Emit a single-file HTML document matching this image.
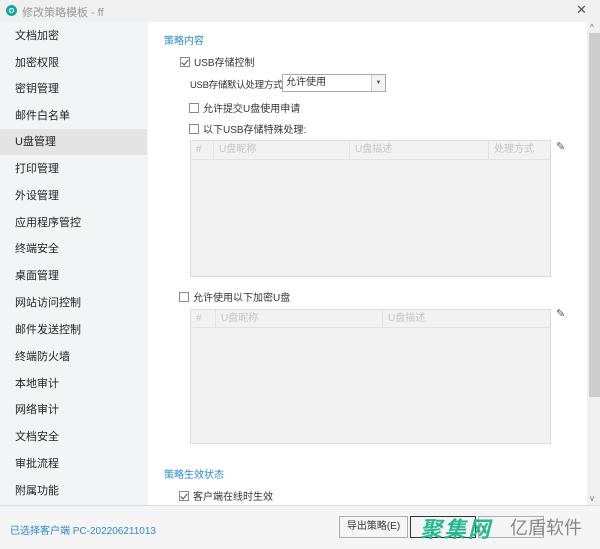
<!DOCTYPE html>
<html><head><meta charset="utf-8"><style>
*{margin:0;padding:0;box-sizing:border-box}
body{width:600px;height:549px;overflow:hidden;background:#f3f4f6;font-family:"Liberation Sans","Noto Sans CJK SC",sans-serif;font-size:11px;color:#333;position:relative}
.abs{position:absolute}
.title{left:0;top:0;width:600px;height:22px;background:#f0f0f0}
.side div{position:absolute;left:0;width:147px;height:26px;line-height:26px;padding-left:15px;font-size:11px;color:#222}
.content{left:148px;top:22px;width:439px;height:483px;background:#fff}
.scroll{left:587px;top:22px;width:13px;height:483px;background:#f0f0f0}
.thumb{left:589px;top:33px;width:11px;height:364px;background:#cdcdcd}
.blue{color:#2a8bd0;font-size:10px}
.cb{display:inline-block;width:10px;height:10px;border:1px solid #888;background:#fff;vertical-align:-1px;margin-right:4px;position:relative}
.cb.on::after{content:"";position:absolute;left:2px;top:0px;width:3px;height:6px;border:solid #444;border-width:0 1px 1px 0;transform:rotate(40deg)}
.t{font-size:10px;color:#333}
.table{background:#f2f2f2;border:1px solid #ddd}
.th{position:absolute;top:0;height:18px;line-height:18px;color:#c4c4c4;font-size:10px;border-right:1px solid #e2e2e2;padding-left:5px}
.footer{left:0;top:505px;width:600px;height:44px;background:#f5f5f5;border-top:1px solid #ddd}
.btn{height:22px;border:1px solid #adadad;background:#f5f5f5;line-height:20px;text-align:center;font-size:10px}
</style></head><body>
<div class="abs title"></div>
<div class="abs" style="left:6px;top:5px;width:11px;height:11px;border-radius:50%;background:#1aa79a"></div>
<div class="abs" style="left:9px;top:8px;width:5px;height:5px;border-radius:50%;border:1.5px solid #fff"></div>
<div class="abs" style="left:22px;top:4px;font-size:11px;color:#999">修改策略模板 - ff</div>
<div class="abs" style="left:576px;top:2px;font-size:13px;color:#555">✕</div>
<div class="side">
<div style="top:23px">文档加密</div><div style="top:50px">加密权限</div><div style="top:76px">密钥管理</div><div style="top:103px">邮件白名单</div>
<div style="top:129px;background:#e4e4e4">U盘管理</div><div style="top:156px">打印管理</div><div style="top:183px">外设管理</div><div style="top:210px">应用程序管控</div>
<div style="top:236px">终端安全</div><div style="top:263px">桌面管理</div><div style="top:290px">网站访问控制</div><div style="top:317px">邮件发送控制</div>
<div style="top:344px">终端防火墙</div><div style="top:371px">本地审计</div><div style="top:397px">网络审计</div><div style="top:424px">文档安全</div>
<div style="top:451px">审批流程</div><div style="top:478px">附属功能</div>
</div>
<div class="abs" style="left:150px;top:258px;font-size:10px;color:#555;line-height:4px">·<br>·<br>·</div>
<div class="abs content"></div>
<div class="abs scroll"></div><div class="abs thumb"></div>
<div class="abs" style="left:590px;top:23px;font-size:8px;color:#666">^</div>
<div class="abs" style="left:590px;top:494px;font-size:8px;color:#666">v</div>
<div class="abs blue" style="left:164px;top:32px">策略内容</div>
<div class="abs t" style="left:180px;top:54px"><span class="cb on"></span>USB存储控制</div>
<div class="abs t" style="left:190px;top:77px;font-size:9.5px;letter-spacing:-0.3px">USB存储默认处理方式</div>
<div class="abs" style="left:282px;top:74px;width:104px;height:18px;border:1px solid #aaa;background:#fff;font-size:10px;line-height:16px;padding-left:3px">允许使用</div>
<div class="abs" style="left:371px;top:75px;width:14px;height:16px;border-left:1px solid #ccc;background:#f4f4f4;font-size:6px;text-align:center;line-height:16px;color:#555">▼</div>
<div class="abs t" style="left:189px;top:100px"><span class="cb"></span>允许提交U盘使用申请</div>
<div class="abs t" style="left:189px;top:121px"><span class="cb"></span>以下USB存储特殊处理:</div>
<div class="abs table" style="left:190px;top:140px;width:361px;height:137px">
<div style="position:absolute;left:0;top:0;width:100%;height:19px;border-bottom:1px solid #e2e2e2"></div>
<div class="th" style="left:0;width:23px">#</div><div class="th" style="left:23px;width:136px">U盘昵称</div><div class="th" style="left:159px;width:139px">U盘描述</div><div class="th" style="left:298px;width:62px;border:none">处理方式</div>
</div>
<div class="abs" style="left:556px;top:140px;font-size:11px;color:#555">✎</div>
<div class="abs t" style="left:179px;top:289px"><span class="cb"></span>允许使用以下加密U盘</div>
<div class="abs table" style="left:190px;top:309px;width:361px;height:135px">
<div style="position:absolute;left:0;top:0;width:100%;height:18px;border-bottom:1px solid #e2e2e2"></div>
<div class="th" style="left:0;width:25px">#</div><div class="th" style="left:25px;width:167px">U盘昵称</div><div class="th" style="left:192px;width:168px;border:none">U盘描述</div>
</div>
<div class="abs" style="left:556px;top:307px;font-size:11px;color:#555">✎</div>
<div class="abs blue" style="left:164px;top:466px">策略生效状态</div>
<div class="abs t" style="left:179px;top:488px"><span class="cb on"></span>客户端在线时生效</div>
<div class="abs footer"></div>
<div class="abs blue" style="left:10px;top:522px">已选择客户端 PC-202206211013</div>
<div class="abs btn" style="left:339px;top:516px;width:69px">导出策略(E)</div>
<div class="abs btn" style="left:410px;top:516px;width:66px;border:1px solid #333"></div>
<div class="abs btn" style="left:478px;top:516px;width:66px"></div>
<div class="abs" style="left:420px;top:512px;font-size:22px;font-weight:bold;font-style:italic;color:#25b98d;letter-spacing:2px">聚集网</div>
<div class="abs" style="left:510px;top:514px;font-size:18px;color:#888">亿盾软件</div>
</body></html>
